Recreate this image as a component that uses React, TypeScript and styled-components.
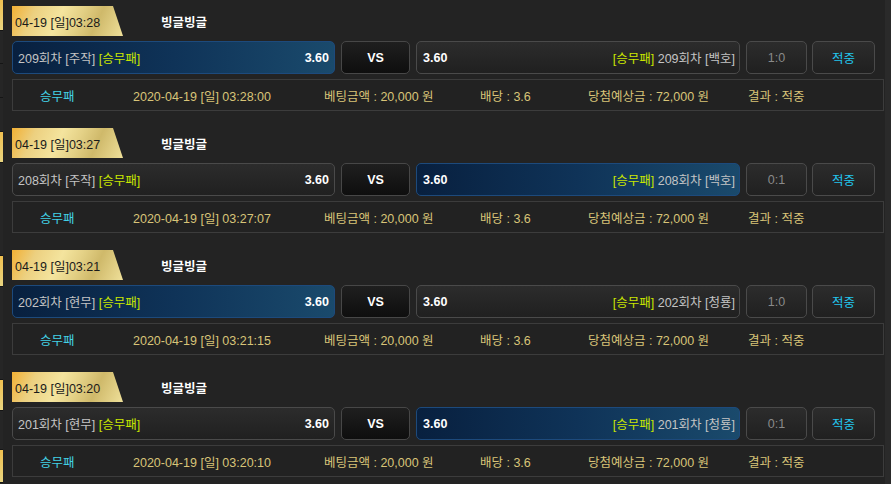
import styled, { createGlobalStyle, css } from "styled-components";

type Side = "left" | "right";

interface Bet {
  time: string;
  round: number;
  homeTeam: string;
  awayTeam: string;
  pick: Side;
  score: string;
  placed: string;
}

const bets: Bet[] = [
  { time: "04-19 [일]03:28", round: 209, homeTeam: "주작", awayTeam: "백호", pick: "left", score: "1:0", placed: "2020-04-19 [일] 03:28:00" },
  { time: "04-19 [일]03:27", round: 208, homeTeam: "주작", awayTeam: "백호", pick: "right", score: "0:1", placed: "2020-04-19 [일] 03:27:07" },
  { time: "04-19 [일]03:21", round: 202, homeTeam: "현무", awayTeam: "청룡", pick: "left", score: "1:0", placed: "2020-04-19 [일] 03:21:15" },
  { time: "04-19 [일]03:20", round: 201, homeTeam: "현무", awayTeam: "청룡", pick: "right", score: "0:1", placed: "2020-04-19 [일] 03:20:10" },
];

// the cut-off column on the far left
const edgeParts = [
  { h: 30, gold: true },
  { h: 32, gold: false },
  { h: 33, gold: false },
  { h: 33, gold: false },
  { h: 30, gold: true },
  { h: 92, gold: false },
  { h: 30, gold: true },
  { h: 92, gold: false },
  { h: 30, gold: true },
  { h: 38, gold: false },
  { h: 32, gold: true },
  { h: 20, gold: false },
];

const GlobalStyle = createGlobalStyle`
  html, body {
    margin: 0;
    padding: 0;
    background: #232323;
  }
  body {
    font-family: "Liberation Sans", "Noto Sans CJK KR", sans-serif;
    font-size: 12.5px;
  }
`;

export default function App() {
  return (
    <>
      <GlobalStyle />
      <Page>
        <LeftEdge>
          {edgeParts.map((p, i) => (
            <EdgePart key={i} $gold={p.gold} style={{ height: p.h }} />
          ))}
        </LeftEdge>
        <Main>
          {bets.map((b) => (
            <Block key={b.round}>
              <Header>
                <TimeTab>{b.time}</TimeTab>
                <GameTitle>빙글빙글</GameTitle>
              </Header>
              <MatchRow>
                <TeamBox $active={b.pick === "left"}>
                  <TeamName>
                    {b.round}회차 [{b.homeTeam}] <Market>[승무패]</Market>
                  </TeamName>
                  <Odds>3.60</Odds>
                </TeamBox>
                <VsBox>VS</VsBox>
                <TeamBox $active={b.pick === "right"} $away>
                  <Odds>3.60</Odds>
                  <TeamName>
                    <Market>[승무패]</Market> {b.round}회차 [{b.awayTeam}]
                  </TeamName>
                </TeamBox>
                <ScoreBox>{b.score}</ScoreBox>
                <ResultBox>적중</ResultBox>
              </MatchRow>
              <InfoBar>
                <Cyan>승무패</Cyan>
                <span>{b.placed}</span>
                <span>베팅금액 : 20,000 원</span>
                <span>배당 : 3.6</span>
                <span>당첨예상금 : 72,000 원</span>
                <span>결과 : 적중</span>
              </InfoBar>
            </Block>
          ))}
        </Main>
        <RightTrack />
      </Page>
    </>
  );
}

const Page = styled.div`
  display: flex;
  width: 891px;
  height: 484px;
  overflow: hidden;
  background: #232323;
`;

const LeftEdge = styled.div`
  display: flex;
  flex-direction: column;
  width: 3px;
  flex-shrink: 0;
  background: #1d1d1d;
`;

const EdgePart = styled.div<{ $gold: boolean }>`
  flex-shrink: 0;
  border-bottom: 1px solid #151515;
  background: ${(p) => (p.$gold ? "linear-gradient(180deg, #f0c050, #e8d480)" : "#262626")};
`;

const Main = styled.div`
  flex: 1;
  padding: 0 1px 0 9px;
`;

const RightTrack = styled.div`
  width: 6px;
  flex-shrink: 0;
  background: #2a2a2a;
`;

const Block = styled.div`
  padding: 6px 0 11px;
`;

const Header = styled.div`
  display: flex;
  align-items: center;
  height: 30px;
`;

const TimeTab = styled.div`
  display: flex;
  align-items: center;
  width: 111px;
  height: 30px;
  padding-left: 3px;
  box-sizing: border-box;
  color: #1a1a1a;
  clip-path: polygon(0 0, 91% 0, 100% 100%, 0 100%);
  background: linear-gradient(115deg, #f2b034 0%, #ecd080 20%, #f4e49e 42%, #e4d186 58%, #cfb96a 74%, #efe09a 100%);
`;

const GameTitle = styled.div`
  margin-left: 38px;
  color: #ffffff;
  font-weight: 700;
`;

const MatchRow = styled.div`
  display: flex;
  margin-top: 5px;
  height: 33px;
`;

const boxBase = css`
  display: flex;
  align-items: center;
  box-sizing: border-box;
  height: 33px;
  border-radius: 5px;
  border: 1px solid #4a4a4a;
  background: linear-gradient(180deg, #2c2c2c 0%, #202020 100%);
`;

const TeamBox = styled.div<{ $active: boolean; $away?: boolean }>`
  ${boxBase};
  width: ${(p) => (p.$away ? "324px" : "323px")};
  justify-content: space-between;
  white-space: nowrap;
  padding: ${(p) => (p.$away ? "0 4px 0 6px" : "0 5px 0 5px")};
  ${(p) =>
    p.$active &&
    css`
      border-color: #1d4a7c;
      background: linear-gradient(90deg, #08203f 0%, #0f3358 50%, #1a4a6c 100%);
    `}
`;

const TeamName = styled.span`
  color: #c4c4c4;
`;

const Market = styled.span`
  color: #c8e600;
`;

const Odds = styled.span`
  color: #ffffff;
  font-weight: 700;
`;

const VsBox = styled.div`
  ${boxBase};
  width: 69px;
  margin: 0 6px;
  justify-content: center;
  color: #ffffff;
  font-weight: 700;
  border-color: #474747;
  background: linear-gradient(180deg, #1f1f1f 0%, #0e0e0e 100%);
`;

const ScoreBox = styled.div`
  ${boxBase};
  width: 61px;
  margin-left: 6px;
  justify-content: center;
  color: #8a8a8a;
`;

const ResultBox = styled.div`
  ${boxBase};
  width: 63px;
  margin-left: 5px;
  justify-content: center;
  color: #22c6ee;
`;

const InfoBar = styled.div`
  display: grid;
  grid-template-columns: 93px 191px 156px 108px 160px 1fr;
  align-items: center;
  margin-top: 5px;
  height: 32px;
  box-sizing: border-box;
  padding-left: 27px;
  border: 1px solid #3c3c3c;
  background: #222222;
  color: #d8c478;
  white-space: nowrap;
`;

const Cyan = styled.span`
  color: #42d2e6;
`;
